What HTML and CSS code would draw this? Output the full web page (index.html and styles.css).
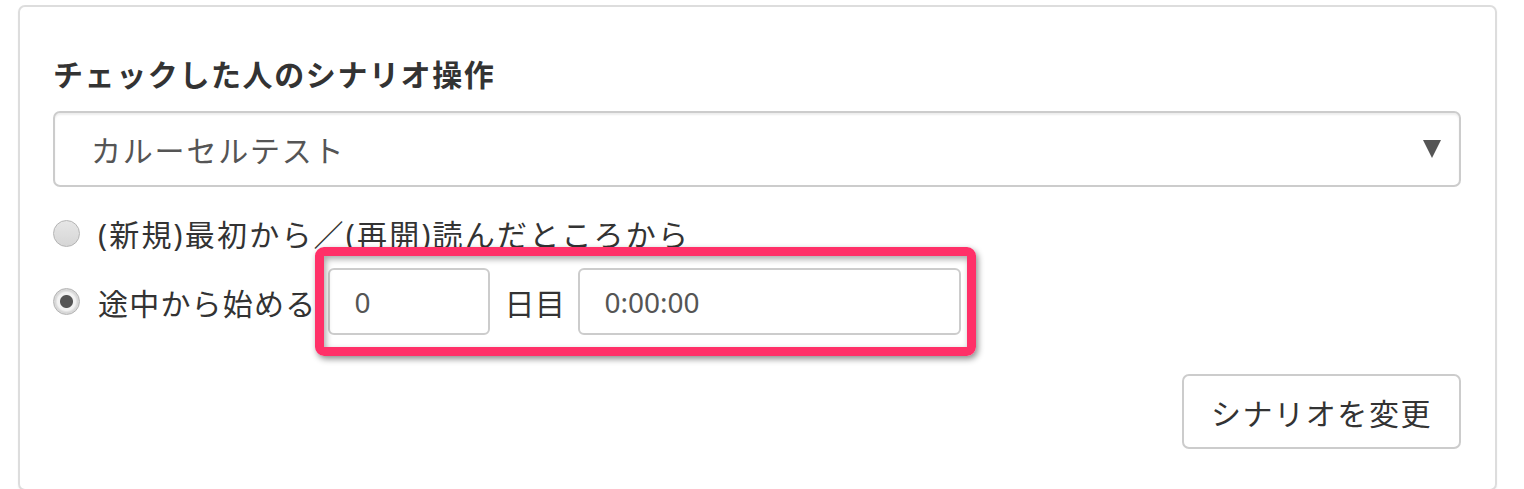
FILE: index.html
```html
<!DOCTYPE html>
<html lang="ja">
<head>
<meta charset="utf-8">
<title>シナリオ操作</title>
<link rel="stylesheet" href="styles.css">
</head>
<body>
<div class="panel">
  <h2 class="heading">チェックした人のシナリオ操作</h2>
  <div class="select">
    <span class="select-text">カルーセルテスト</span>
    <span class="select-arrow"></span>
  </div>
  <label class="radio-row">
    <span class="radio"></span>
    <span class="radio-label label-wide">(新規)最初から／(再開)読んだところから</span>
  </label>
  <div class="radio-row row-mid">
    <span class="radio checked"></span>
    <span class="radio-label">途中から始める</span>
    <span class="input input-day">0</span>
    <span class="unit">日目</span>
    <span class="input input-time">0:00:00</span>
    <span class="highlight"></span>
  </div>
  <div class="actions">
    <button class="btn">シナリオを変更</button>
  </div>
</div>
</body>
</html>
```

FILE: styles.css
```css
html, body {
  margin: 0;
  padding: 0;
  background: #ffffff;
}
body {
  padding: 5px 27px 0 18px;
  font-family: "Noto Sans", "Noto Sans CJK JP", sans-serif;
  color: #333333;
}
.panel {
  border: 2px solid #dddddd;
  border-radius: 7px;
  padding: 46px 34px 35px 33px;
  height: 401px;
  box-shadow: 0 1px 2px rgba(0,0,0,0.06);
}
.heading {
  margin: 0;
  font-size: 30px;
  font-weight: 700;
  line-height: 44px;
  color: #333333;
  letter-spacing: 1.6px;
}
.select {
  margin-top: 14px;
  height: 72px;
  border: 2px solid #cccccc;
  border-radius: 7px;
  box-shadow: inset 0 2px 2px rgba(0,0,0,0.07);
  display: flex;
  align-items: center;
  justify-content: space-between;
  padding: 0 18px 0 36px;
}
.select-text {
  font-size: 30px;
  color: #555555;
  letter-spacing: 1.8px;
}
.select-arrow {
  width: 0;
  height: 0;
  border-left: 9px solid transparent;
  border-right: 9px solid transparent;
  border-top: 18px solid #555555;
}
.radio-row {
  display: flex;
  align-items: center;
  height: 44px;
  margin-top: 24px;
  position: relative;
}
.row-mid {
  height: 67px;
  margin-top: 13px;
}
.radio {
  width: 25px;
  height: 25px;
  border-radius: 50%;
  border: 1px solid #b4b4b4;
  background: linear-gradient(#e6e6e6, #d6d6d6);
  box-sizing: content-box;
  flex: none;
}
.radio.checked {
  background: radial-gradient(circle, #555555 0 6px, #f2f2f2 7px 9px, #d8d8d8 11px);
}
.radio-label {
  margin-left: 18px;
  font-size: 30px;
  color: #333333;
  letter-spacing: 1.2px;
}
.label-wide {
  letter-spacing: 2.2px;
}
.input {
  height: 63px;
  border: 2px solid #cccccc;
  border-radius: 6px;
  box-sizing: content-box;
  display: flex;
  align-items: center;
  padding-left: 24px;
  font-family: "Noto Sans", "Liberation Sans", sans-serif;
  font-size: 28px;
  color: #555555;
  background: #ffffff;
}
.input-day {
  margin-left: 12px;
  width: 134px;
}
.unit {
  margin: 0 13px 0 14px;
  font-size: 30px;
  color: #333333;
  letter-spacing: 0.5px;
}
.input-time {
  width: 355px;
}
.highlight {
  position: absolute;
  left: 262px;
  top: -21px;
  width: 643px;
  height: 91px;
  border: 9px solid #ff3068;
  border-radius: 9px;
  box-shadow: 2px 3px 6px rgba(0,0,0,0.45), inset 2px 3px 6px rgba(0,0,0,0.35);
  pointer-events: none;
}
.actions {
  display: flex;
  justify-content: flex-end;
  margin-top: 39px;
}
.btn {
  width: 279px;
  height: 75px;
  border: 2px solid #cccccc;
  border-radius: 7px;
  background: #ffffff;
  font-family: "Noto Sans", "Noto Sans CJK JP", sans-serif;
  font-size: 30px;
  color: #333333;
  letter-spacing: 1.6px;
  padding: 0;
}
```
